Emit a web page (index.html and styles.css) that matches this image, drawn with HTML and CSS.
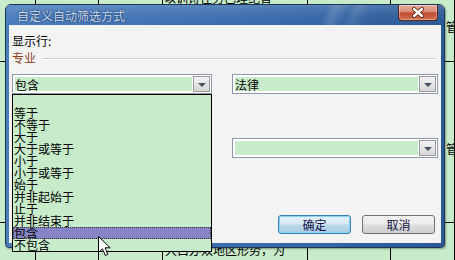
FILE: index.html
```html
<!DOCTYPE html>
<html lang="zh-CN">
<head>
    <meta charset="UTF-8">
    <title>自定义自动筛选方式</title>
    <link rel="stylesheet" href="styles.css">
</head>
<body>
    <!-- worksheet behind the dialog -->
    <div class="sheet">
        <div class="cell"></div>
        <div class="cell"></div>
        <div class="cell"></div>
        <div class="cell"><div class="cut-top">以训诗往务已理纪舍</div></div>
        <div class="cell"></div>
        <div class="cell side-note"><div>（</div><div>管</div></div>

        <div class="cell"></div>
        <div class="cell"></div>
        <div class="cell"></div>
        <div class="cell"></div>
        <div class="cell"></div>
        <div class="cell side-note lower"><div>（</div><div>管</div></div>

        <div class="cell"></div>
        <div class="cell"></div>
        <div class="cell"></div>
        <div class="cell bottom-text">大白办双地区形势，为</div>
        <div class="cell"></div>
        <div class="cell"></div>
    </div>

    <div class="dialog">
        <div class="titlebar">
            <span class="title">自定义自动筛选方式</span>
            <button class="close-btn">
                <svg width="14" height="11" viewBox="0 0 14 11">
                    <path d="M3 2 L11 9 M11 2 L3 9" stroke="#5a1a10" stroke-width="4" stroke-linecap="round"/>
                    <path d="M3 2 L11 9 M11 2 L3 9" stroke="#ffffff" stroke-width="2.4" stroke-linecap="round"/>
                </svg>
            </button>
        </div>

        <div class="client">
            <div class="row-label">显示行:</div>
            <div class="group-title"><span>专业</span><i class="rule"></i></div>

            <div class="criteria">
                <div class="combo operator">
                    <div class="field">包含</div>
                    <div class="arrow"></div>
                    <ul class="dropdown">
                        <li></li>
                        <li>等于</li>
                        <li>不等于</li>
                        <li>大于</li>
                        <li>大于或等于</li>
                        <li>小于</li>
                        <li>小于或等于</li>
                        <li>始于</li>
                        <li>并非起始于</li>
                        <li>止于</li>
                        <li>并非结束于</li>
                        <li class="selected">包含</li>
                        <li>不包含</li>
                    </ul>
                </div>
                <div class="combo value">
                    <div class="field">法律</div>
                    <div class="arrow"></div>
                </div>
            </div>

            <div class="criteria second">
                <div class="combo operator">
                    <div class="field"></div>
                    <div class="arrow"></div>
                </div>
                <div class="combo value">
                    <div class="field"></div>
                    <div class="arrow"></div>
                </div>
            </div>

            <div class="actions">
                <button class="btn default">确定</button>
                <button class="btn">取消</button>
            </div>
        </div>
    </div>

    <svg class="cursor" width="13" height="21" viewBox="0 0 13 21">
        <path d="M0.5 0.5 L0.5 16.5 L4.5 12.8 L7.3 19.5 L9.8 18.4 L7.1 11.8 L12.2 11.8 Z" fill="#ffffff" stroke="#000000" stroke-width="1"/>
    </svg>
</body>
</html>
```

FILE: styles.css
```css
* {
    margin: 0;
    padding: 0;
    box-sizing: border-box;
}

body {
    width: 455px;
    height: 260px;
    overflow: hidden;
    position: relative;
    background: #c8ecca;
    font-family: "Noto Sans CJK SC", "Noto Sans", sans-serif;
    font-size: 12px;
    color: #000;
}

/* worksheet */
.sheet {
    display: grid;
    grid-template-columns: 36px 63px 64px 145px 83px 64px;
    grid-template-rows: 62px 161px 38px;
}

.cell {
    border-right: 1px solid #000;
    border-bottom: 1px solid #000;
    overflow: hidden;
    white-space: nowrap;
    line-height: 16px;
}

.cut-top {
    margin-top: -10px;
    padding-left: 1px;
}

.side-note {
    padding: 3px 0 0 55px;
}

.side-note.lower {
    padding-top: 63px;
}

.bottom-text {
    padding: 20px 0 0 2px;
    line-height: 14px;
}

/* dialog window */
.dialog {
    position: absolute;
    left: 5px;
    top: 4px;
    width: 440px;
    height: 244px;
    display: flex;
    flex-direction: column;
    padding: 0 3px 4px;
    border: 1px solid #1c3557;
    border-radius: 6px 6px 4px 4px;
    background: linear-gradient(90deg, #4a7dbc 0%, #3a6cad 55%, #2a5996 100%);
    box-shadow: 1px 1px 2px rgba(0,0,0,0.35);
}

.titlebar {
    height: 20px;
    display: flex;
    align-items: flex-start;
    background:
        linear-gradient(115deg, transparent 72%, rgba(255,255,255,0.14) 74%, transparent 77%, rgba(255,255,255,0.1) 79%, transparent 82%),
        linear-gradient(180deg, rgba(255,255,255,0.16) 0%, rgba(255,255,255,0.04) 50%, transparent 100%);
    margin: 0 -3px;
    padding: 0 3px;
}

.title {
    padding: 3px 0 0 8px;
    line-height: 15px;
    color: #cfdcf0;
    text-shadow: 0 0 2px #143360, 0 0 1px #143360;
}

.close-btn {
    margin-left: auto;
    margin-right: 3px;
    width: 40px;
    height: 16px;
    border: 1px solid #5b2418;
    border-top: none;
    border-radius: 0 0 4px 4px;
    background: linear-gradient(180deg, #e8ad9f 0%, #d98a78 45%, #c24a30 52%, #cf7052 100%);
    box-shadow: inset 0 0 0 1px rgba(255,255,255,0.35);
    display: flex;
    align-items: center;
    justify-content: center;
}

.client {
    flex: 1;
    background: #f3f3f3;
    padding: 9px 3px 0 3px;
    display: flex;
    flex-direction: column;
}

.row-label {
    height: 14px;
    line-height: 14px;
}

.group-title {
    margin-top: 3px;
    height: 14px;
    line-height: 14px;
    display: flex;
    align-items: center;
    color: #8e3b18;
}

.rule {
    flex: 1;
    height: 2px;
    margin: 1px 1px 0 6px;
    border-top: 1px solid #d6d0c6;
    border-bottom: 1px solid #ffffff;
}

.criteria {
    margin-top: 9px;
    display: flex;
    gap: 20px;
}

.criteria.second {
    margin-top: 44px;
}

.combo {
    position: relative;
    height: 20px;
    display: flex;
    border: 1px solid #8d9aab;
    background: #fff;
    padding: 1px;
}

.combo.operator {
    width: 200px;
}

.combo.value {
    width: 206px;
}

.field {
    flex: 1;
    margin: 1px;
    background: #c8ecca;
    line-height: 15px;
}

.arrow {
    width: 17px;
    border: 1px solid #9a9a9a;
    background: linear-gradient(180deg, #f4f4f4 0%, #e6e6e6 50%, #d6d6d6 100%);
    position: relative;
}

.arrow::after {
    content: "";
    position: absolute;
    left: 4px;
    top: 6px;
    border-left: 4px solid transparent;
    border-right: 4px solid transparent;
    border-top: 4px solid #4a5360;
}

/* open list of the first operator box */
.dropdown {
    position: absolute;
    left: -1px;
    top: 19px;
    width: 200px;
    list-style: none;
    border: 1px solid #000;
    background: #c8ecca;
    z-index: 5;
}

.dropdown li {
    height: 12px;
    line-height: 12px;
    padding-left: 1px;
    white-space: nowrap;
}

.dropdown li.selected {
    background: #8585c6;
    outline: 1px dotted #333;
    outline-offset: -1px;
}

.actions {
    margin-top: 57px;
    display: flex;
    justify-content: flex-end;
    gap: 11px;
    padding-right: 3px;
}

.btn {
    width: 73px;
    height: 19px;
    border: 1px solid #707070;
    border-radius: 3px;
    background: linear-gradient(180deg, #f3f3f3 0%, #ebebeb 48%, #dddddd 52%, #cfcfcf 100%);
    font-family: inherit;
    font-size: 12px;
    color: #131347;
    line-height: 15px;
}

.btn.default {
    border-color: #3c7fb1;
    background: linear-gradient(180deg, #e6f2f9 0%, #d6e8f3 48%, #bcd9ec 52%, #a9cde6 100%);
    box-shadow: inset 0 0 0 1px #8ad2f4;
}

.cursor {
    position: absolute;
    left: 98px;
    top: 236px;
    z-index: 10;
}
```
